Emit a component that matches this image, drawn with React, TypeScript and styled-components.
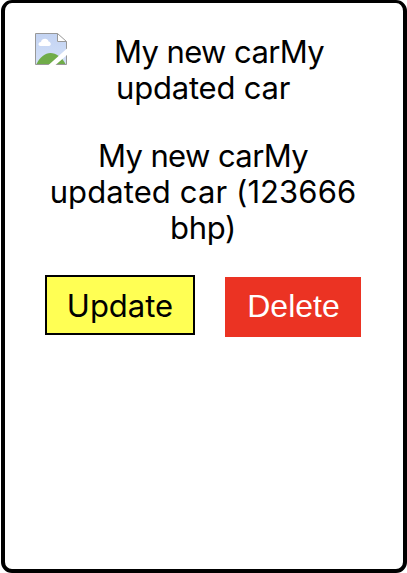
import React from "react";
import styled, { createGlobalStyle } from "styled-components";

const GlobalStyle = createGlobalStyle`
  body { margin: 0; background: #fff; overflow: hidden; }
  * { box-sizing: border-box; }
`;

const Card = styled.article`
  width: 406px;
  height: 573px;
  margin-left: 1px;
  padding: 30px 28px 0 30px;
  border: 4px solid #000;
  border-top-width: 3px;
  border-radius: 11px;
  color: #000;
  font: 400 31px/36px Inter, "Liberation Sans", sans-serif;
  letter-spacing: -0.2px;
`;

const Picture = styled.div`
  display: flex;
  height: 72px;
`;

const Broken = styled.svg`
  flex: none;
  width: 32px;
  height: 32px;
`;

const AltText = styled.div`
  margin: 1px 0 0 47px;
`;

const Line = styled.span<{ $tracking?: number; $indent?: number }>`
  display: block;
  white-space: nowrap;
  padding-left: ${(p) => p.$indent ?? 0}px;
  letter-spacing: ${(p) => p.$tracking ?? -0.2}px;
`;

const Title = styled.p`
  width: 338px;
  margin: 33px 0 0 -1px;
  text-align: center;
`;

const Actions = styled.div`
  display: flex;
  gap: 30px;
  margin: 29px 0 0 10px;
`;

const Button = styled.button`
  height: 60px;
  border: 0;
  border-radius: 0;
`;

const UpdateButton = styled(Button)`
  width: 150px;
  padding: 2px 0 0;
  border: 2px solid #000;
  background: #ffff54;
  color: #000;
  font: inherit;
  letter-spacing: 0;
`;

const DeleteButton = styled(Button)`
  width: 136px;
  margin-top: 2px;
  padding: 0 0 2px 1px;
  background: #eb3323;
  color: #fff;
  font: 400 32px/36px "Liberation Sans", Arial, sans-serif;
`;

export default function App() {
  return (
    <>
      <GlobalStyle />
      <Card>
        <Picture>
          <Broken viewBox="0 0 32 32" aria-hidden="true">
            <defs>
              <linearGradient id="sky" x1="0" y1="0" x2="0" y2="1">
                <stop offset="0" stopColor="#c3d3f2" />
                <stop offset="1" stopColor="#d3e0f8" />
              </linearGradient>
            </defs>
            <path d="M.5.5H22L31.5 9V31.5H.5Z" fill="#fff" />
            <path d="M1 1H22V9H31V31H1Z" fill="url(#sky)" />
            <path d="M5.5 13C3 13 2.500 9.500 6 9C6.500 5 13 4.500 13.500 8.500C16.500 9 16.500 13 14 13Z" fill="#fff" />
            <path d="M1.500 31C5 24 10 20 15.500 20C21 20 27 24 30.500 31Z" fill="#70ac49" />
            <path d="M22.500 .5V8.500H31.500Z" fill="#fff" />
            <path d="M.5 31.500V.5H22.500L31.500 8.500V31.500ZM22.500 .5V8.500H31.500" fill="none" stroke="#989898" />
            <path d="M13.500 32L32 15.500V22L20.500 32Z" fill="#fff" />
          </Broken>
          <AltText>
            <Line $tracking={-0.6}>My new carMy</Line>
            <Line $indent={2}>updated car</Line>
          </AltText>
        </Picture>
        <Title>
          <Line $tracking={-0.6}>My new carMy</Line>
          <Line $tracking={0.1}>updated car (123666</Line>
          <Line $tracking={-0.3}>bhp)</Line>
        </Title>
        <Actions>
          <UpdateButton>Update</UpdateButton>
          <DeleteButton>Delete</DeleteButton>
        </Actions>
      </Card>
    </>
  );
}
